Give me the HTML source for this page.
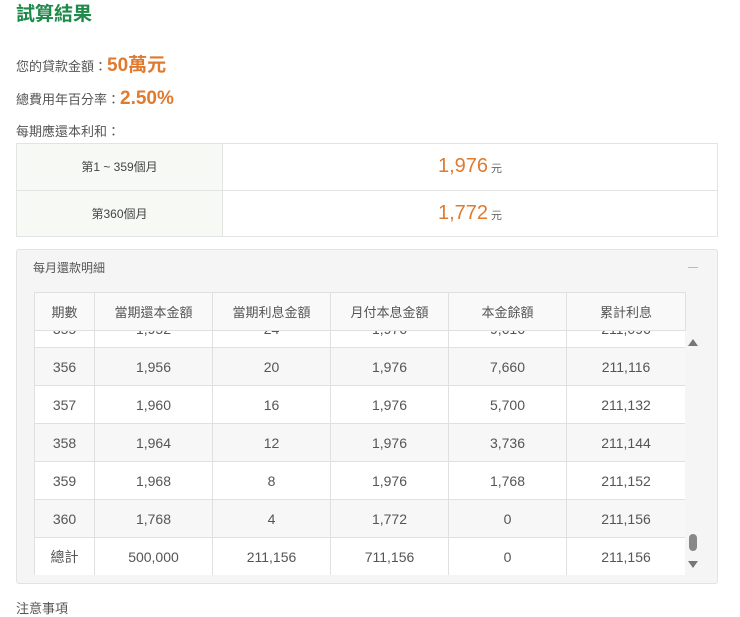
<!DOCTYPE html>
<html><head><meta charset="utf-8"><style>
*{margin:0;padding:0;box-sizing:border-box}
body{width:740px;height:602px;overflow:hidden;background:#fff;font-family:"Liberation Sans","Noto Sans CJK TC",sans-serif;color:#555;position:relative}
.a{position:absolute}
.or{color:#e07a2f}
.t1{border-collapse:collapse;position:absolute;left:16px;top:143px;width:702px}
.t1 td{border:1px solid #e3e3e3;height:46.5px;text-align:center}
.t1 td.l{background:#f7f9f4;width:206px;font-size:12px;color:#444}
.t1 td.r{font-size:20px;color:#e07a2f}
.t1 td.r small{font-size:11px;color:#666;margin-left:3px}
.panel{left:16px;top:249px;width:702px;height:335px;background:#f5f5f5;border:1px solid #e3e3e3;border-radius:3px}
.clip{position:absolute;left:34px;top:331px;width:651px;height:244px;overflow:hidden;background:#fff}
table.d{border-collapse:collapse;width:651px;table-layout:fixed;position:absolute;left:0}
table.d td,table.d th{border:1px solid #e0e0e0;text-align:center;font-size:14px;color:#555;font-weight:normal}
table.d th{font-size:13px}
table.d tr.g td{background:#f7f7f7}
</style></head><body>
<div class="a" style="left:16px;top:-1px;font-size:19px;color:#1e8a4a;font-weight:bold">試算結果</div>
<div class="a" style="left:16px;top:50px;font-size:13px">您的貸款金額：<span class="or" style="font-size:19px;font-weight:bold">50萬元</span></div>
<div class="a" style="left:16px;top:88px;font-size:13px">總費用年百分率：<span class="or" style="font-size:19px;font-weight:bold">2.50%</span></div>
<div class="a" style="left:16px;top:121px;font-size:13px">每期應還本利和：</div>
<table class="t1"><tr><td class="l">第1 ~ 359個月</td><td class="r">1,976<small>元</small></td></tr>
<tr><td class="l">第360個月</td><td class="r">1,772<small>元</small></td></tr></table>
<div class="a panel"></div>
<div class="a" style="left:33px;top:259px;font-size:12px;color:#555">每月還款明細</div>
<div class="a" style="left:688px;top:267px;width:10px;height:1px;background:#bbb"></div>
<div class="clip">
<table class="d" style="top:-22px">
<colgroup><col style="width:60px"><col style="width:118px"><col style="width:118px"><col style="width:118px"><col style="width:118px"><col style="width:119px"></colgroup>
<tr style="height:38px"><td>355</td><td>1,952</td><td>24</td><td>1,976</td><td>9,616</td><td>211,096</td></tr>
<tr class="g" style="height:38px"><td>356</td><td>1,956</td><td>20</td><td>1,976</td><td>7,660</td><td>211,116</td></tr>
<tr style="height:38px"><td>357</td><td>1,960</td><td>16</td><td>1,976</td><td>5,700</td><td>211,132</td></tr>
<tr class="g" style="height:38px"><td>358</td><td>1,964</td><td>12</td><td>1,976</td><td>3,736</td><td>211,144</td></tr>
<tr style="height:38px"><td>359</td><td>1,968</td><td>8</td><td>1,976</td><td>1,768</td><td>211,152</td></tr>
<tr class="g" style="height:38px"><td>360</td><td>1,768</td><td>4</td><td>1,772</td><td>0</td><td>211,156</td></tr>
<tr style="height:38px"><td>總計</td><td>500,000</td><td>211,156</td><td>711,156</td><td>0</td><td>211,156</td></tr>
</table></div>
<table class="d a" style="left:34px;top:292px;height:39px;background:#f9f9f9">
<colgroup><col style="width:60px"><col style="width:118px"><col style="width:118px"><col style="width:118px"><col style="width:118px"><col style="width:119px"></colgroup>
<tr><th>期數</th><th>當期還本金額</th><th>當期利息金額</th><th>月付本息金額</th><th>本金餘額</th><th>累計利息</th></tr></table>
<div class="a" style="left:685px;top:331px;width:15px;height:244px;background:#f5f5f5"></div>
<div class="a" style="left:688px;top:339px;width:0;height:0;border-left:5px solid transparent;border-right:5px solid transparent;border-bottom:7px solid #777"></div>
<div class="a" style="left:689px;top:534px;width:8px;height:17px;background:#888;border-radius:4px"></div>
<div class="a" style="left:688px;top:561px;width:0;height:0;border-left:5px solid transparent;border-right:5px solid transparent;border-top:7px solid #777"></div>
<div class="a" style="left:16px;top:598px;font-size:13px;color:#555">注意事項</div>
</body></html>
